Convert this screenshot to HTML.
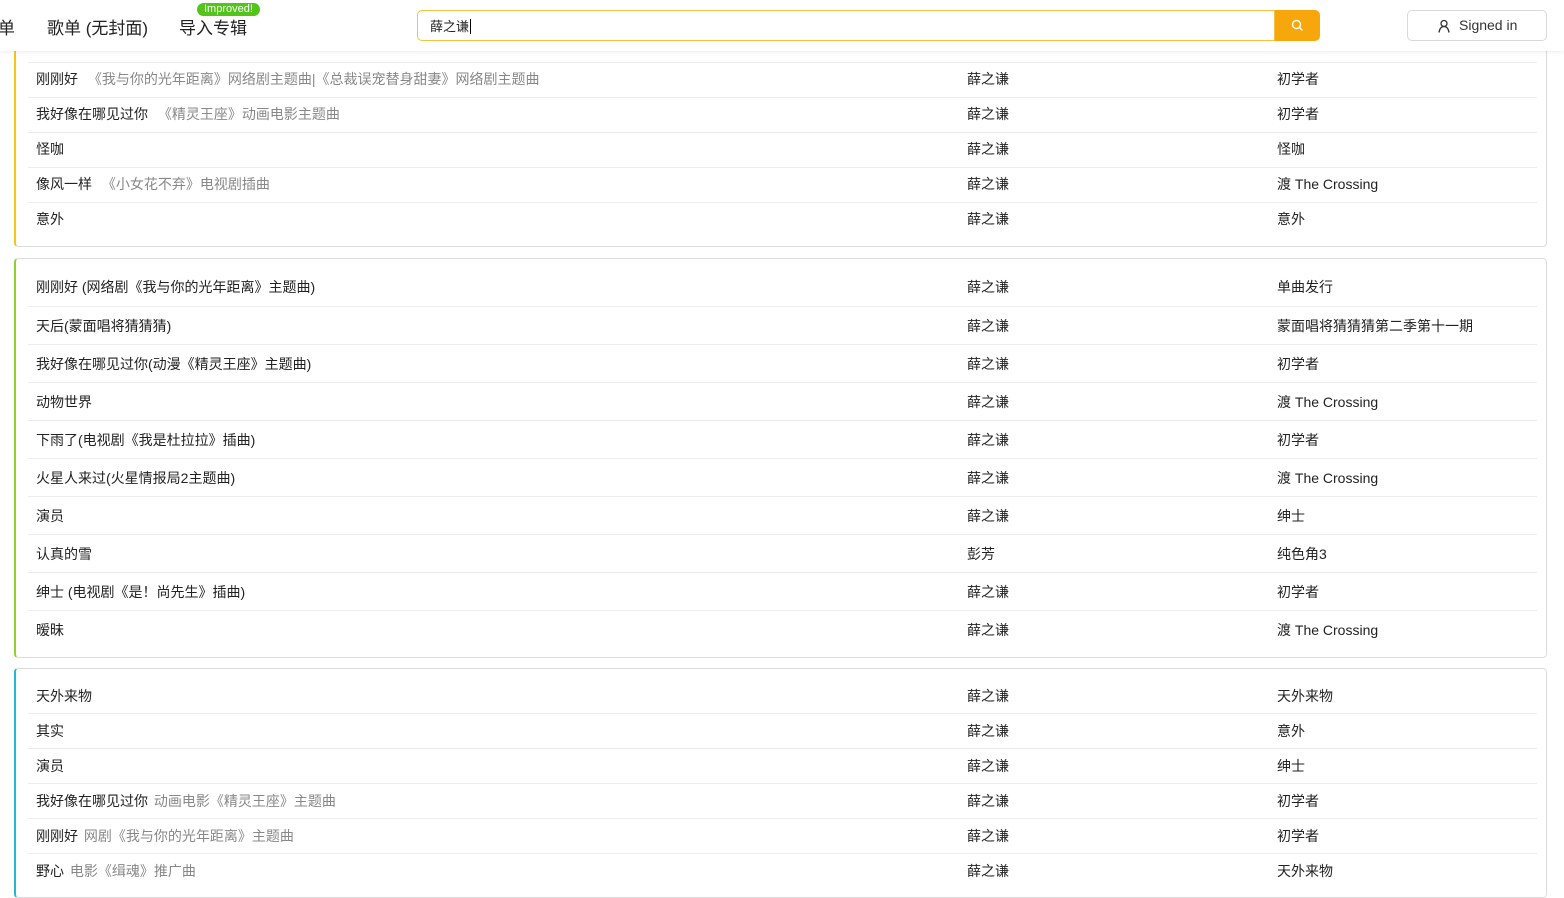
<!DOCTYPE html>
<html><head><meta charset="utf-8"><style>
*{box-sizing:border-box;margin:0;padding:0}
body{width:1564px;height:872px;overflow:hidden;background:#fff;font-family:"Liberation Sans","Noto Sans CJK SC",sans-serif;color:#222;position:relative}
.hdr{position:absolute;left:0;top:0;width:1564px;height:51px;background:#fff;box-shadow:0 1px 4px rgba(0,0,0,.08);z-index:5}
.nav{position:absolute;top:14px;font-size:17px;color:#222}
.badge{position:absolute;left:197px;top:3px;background:#52c41a;color:#fff;font-size:11px;line-height:13px;padding:0 7px;border-radius:7px}
.search{position:absolute;left:417px;top:10px;width:858px;height:31px;border:1px solid #f5c242;border-radius:5px 0 0 5px;font-size:13px;padding:5px 12px}
.sbtn{position:absolute;left:1275px;top:10px;width:45px;height:31px;background:#f7a70b;border-radius:0 5px 5px 0}
.sign{position:absolute;left:1407px;top:10px;width:140px;height:31px;border:1px solid #d9d9d9;border-radius:5px;font-size:14px;color:#333;padding:6px 0 0 51px}
.card{position:absolute;left:14px;width:1533px;border:1px solid #dcdcdc;border-radius:4px}
.row{position:absolute;left:12px;width:1509px;font-size:14px;color:#222;border-top:1px solid #ececec}
.row span{position:absolute;white-space:nowrap}
.t{left:8px}.a{left:939px}.b{left:1249px}
.g{color:#888}
</style></head><body>
<div class="hdr">
<div class="nav" style="left:-2px">单</div>
<div class="nav" style="left:47px">歌单 (无封面)</div>
<div class="nav" style="left:179px">导入专辑</div>
<div class="badge">Improved!</div>
<div class="search">薛之谦<span style="border-left:1px solid #000;margin-left:1px"></span></div>
<div class="sbtn"><svg width="45" height="31" viewBox="0 0 45 31"><circle cx="21.5" cy="14.5" r="4" fill="none" stroke="#fff" stroke-width="1.4"/><path d="M24.5 17.5l3 3" stroke="#fff" stroke-width="1.4"/></svg></div>
<div class="sign"><svg style="position:absolute;left:29px;top:8px" width="14" height="14" viewBox="0 0 14 14"><circle cx="7" cy="4.5" r="3" fill="none" stroke="#333" stroke-width="1.3"/><path d="M2 13.5q1-6 5-6t5 6" fill="none" stroke="#333" stroke-width="1.3"/></svg>Signed in</div>
</div>

<div class="card" style="top:20px;height:227px;border-left:2px solid #f5c518">
<div class="row" style="top:41px;height:35px"><span class="t" style="top:6px">刚刚好 <span class="g" style="position:static;margin-left:6px">《我与你的光年距离》网络剧主题曲|《总裁误宠替身甜妻》网络剧主题曲</span></span><span class="a" style="top:6px">薛之谦</span><span class="b" style="top:6px">初学者</span></div>
<div class="row" style="top:76px;height:35px"><span class="t" style="top:6px">我好像在哪见过你 <span class="g" style="position:static;margin-left:6px">《精灵王座》动画电影主题曲</span></span><span class="a" style="top:6px">薛之谦</span><span class="b" style="top:6px">初学者</span></div>
<div class="row" style="top:111px;height:35px"><span class="t" style="top:6px">怪咖</span><span class="a" style="top:6px">薛之谦</span><span class="b" style="top:6px">怪咖</span></div>
<div class="row" style="top:146px;height:35px"><span class="t" style="top:6px">像风一样 <span class="g" style="position:static;margin-left:6px">《小女花不弃》电视剧插曲</span></span><span class="a" style="top:6px">薛之谦</span><span class="b" style="top:6px">渡 The Crossing</span></div>
<div class="row" style="top:181px;height:35px"><span class="t" style="top:6px">意外</span><span class="a" style="top:6px">薛之谦</span><span class="b" style="top:6px">意外</span></div>
</div>

<div class="card" style="top:258px;height:400px;border-left:2px solid #8fd12f">
<div class="row" style="top:9px;border-top:none"><span class="t" style="top:9px">刚刚好 (网络剧《我与你的光年距离》主题曲)</span><span class="a" style="top:9px">薛之谦</span><span class="b" style="top:9px">单曲发行</span></div>
<div class="row" style="top:47px"><span class="t" style="top:9px">天后(蒙面唱将猜猜猜)</span><span class="a" style="top:9px">薛之谦</span><span class="b" style="top:9px">蒙面唱将猜猜猜第二季第十一期</span></div>
<div class="row" style="top:85px"><span class="t" style="top:9px">我好像在哪见过你(动漫《精灵王座》主题曲)</span><span class="a" style="top:9px">薛之谦</span><span class="b" style="top:9px">初学者</span></div>
<div class="row" style="top:123px"><span class="t" style="top:9px">动物世界</span><span class="a" style="top:9px">薛之谦</span><span class="b" style="top:9px">渡 The Crossing</span></div>
<div class="row" style="top:161px"><span class="t" style="top:9px">下雨了(电视剧《我是杜拉拉》插曲)</span><span class="a" style="top:9px">薛之谦</span><span class="b" style="top:9px">初学者</span></div>
<div class="row" style="top:199px"><span class="t" style="top:9px">火星人来过(火星情报局2主题曲)</span><span class="a" style="top:9px">薛之谦</span><span class="b" style="top:9px">渡 The Crossing</span></div>
<div class="row" style="top:237px"><span class="t" style="top:9px">演员</span><span class="a" style="top:9px">薛之谦</span><span class="b" style="top:9px">绅士</span></div>
<div class="row" style="top:275px"><span class="t" style="top:9px">认真的雪</span><span class="a" style="top:9px">彭芳</span><span class="b" style="top:9px">纯色角3</span></div>
<div class="row" style="top:313px"><span class="t" style="top:9px">绅士 (电视剧《是！尚先生》插曲)</span><span class="a" style="top:9px">薛之谦</span><span class="b" style="top:9px">初学者</span></div>
<div class="row" style="top:351px"><span class="t" style="top:9px">暧昧</span><span class="a" style="top:9px">薛之谦</span><span class="b" style="top:9px">渡 The Crossing</span></div>
</div>

<div class="card" style="top:668px;height:230px;border-left:2px solid #22b8cf">
<div class="row" style="top:10px;border-top:none"><span class="t" style="top:7px">天外来物</span><span class="a" style="top:7px">薛之谦</span><span class="b" style="top:7px">天外来物</span></div>
<div class="row" style="top:44px"><span class="t" style="top:7px">其实</span><span class="a" style="top:7px">薛之谦</span><span class="b" style="top:7px">意外</span></div>
<div class="row" style="top:79px"><span class="t" style="top:7px">演员</span><span class="a" style="top:7px">薛之谦</span><span class="b" style="top:7px">绅士</span></div>
<div class="row" style="top:114px"><span class="t" style="top:7px">我好像在哪见过你 <span class="g" style="position:static;margin-left:2px">动画电影《精灵王座》主题曲</span></span><span class="a" style="top:7px">薛之谦</span><span class="b" style="top:7px">初学者</span></div>
<div class="row" style="top:149px"><span class="t" style="top:7px">刚刚好 <span class="g" style="position:static;margin-left:2px">网剧《我与你的光年距离》主题曲</span></span><span class="a" style="top:7px">薛之谦</span><span class="b" style="top:7px">初学者</span></div>
<div class="row" style="top:184px"><span class="t" style="top:7px">野心 <span class="g" style="position:static;margin-left:2px">电影《缉魂》推广曲</span></span><span class="a" style="top:7px">薛之谦</span><span class="b" style="top:7px">天外来物</span></div>
</div>
</body></html>
